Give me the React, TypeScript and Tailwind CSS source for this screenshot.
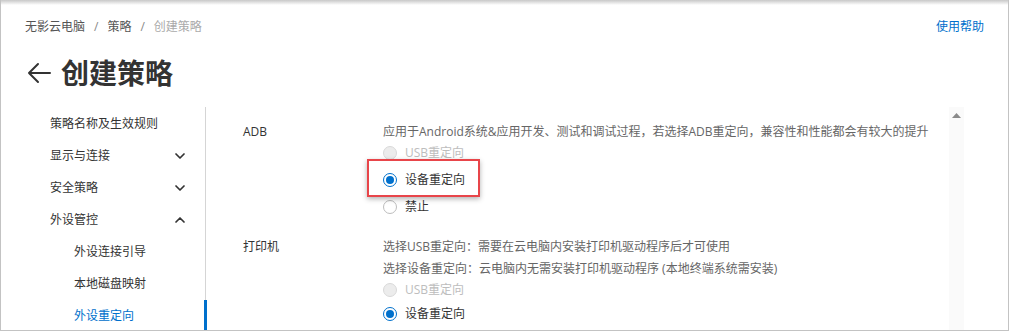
import React from "react";
import { ChevronDown, ChevronUp } from "lucide-react";

const font = { fontFamily: '"Open Sans", "Noto Sans CJK SC", sans-serif' };

function Radio({ state, label, h }: { state: "disabled" | "checked" | "off"; label: string; h: string }) {
  return (
    <div className={`flex items-center ${h}`}>
      {state === "checked" ? (
        <span className="w-[14px] h-[14px] rounded-full border border-[#0070cc] bg-white flex items-center justify-center">
          <span className="w-[8px] h-[8px] rounded-full bg-[#0070cc]" />
        </span>
      ) : state === "disabled" ? (
        <span className="w-[14px] h-[14px] rounded-full border border-[#d9d9d9] bg-[#ececec]" />
      ) : (
        <span className="w-[14px] h-[14px] rounded-full border border-[#bdbdbd] bg-white" />
      )}
      <span className={`ml-[8px] text-[12px] leading-[16px] ${state === "disabled" ? "text-[#bdbdbd]" : "text-[#333]"}`}>{label}</span>
    </div>
  );
}

function NavItem({ label, chevron, indent, active }: { label: string; chevron?: "up" | "down"; indent?: boolean; active?: boolean }) {
  return (
    <div className={`relative h-[32px] flex items-center justify-between pr-[17px] ${indent ? "pl-[73px]" : "pl-[49px]"}`}>
      <span className={`text-[12px] leading-[16px] ${active ? "text-[#0070cc]" : "text-[#333]"}`}>{label}</span>
      {chevron === "down" && <ChevronDown size={16} strokeWidth={2.6} className="text-[#333]" />}
      {chevron === "up" && <ChevronUp size={16} strokeWidth={2.6} className="text-[#333]" />}
      {active && <span className="absolute right-[-2px] top-0 bottom-0 w-[3px] bg-[#0070cc]" />}
    </div>
  );
}

export default function App() {
  return (
    <div style={font} className="relative w-[1009px] h-[331px] overflow-hidden bg-white border-l border-r border-b border-[#c3c3c3] flex flex-col">
      <div className="absolute left-0 right-0 top-0 h-[5px] bg-gradient-to-b from-[#c8c8c8] to-white" />
      <div className="flex items-center justify-between px-[24px] pt-[19px] h-[35px]">
        <div className="flex items-center text-[12px] leading-[16px]">
          <span className="text-[#555]">无影云电脑</span>
          <span className="text-[#888] mx-[9px]">/</span>
          <span className="text-[#555]">策略</span>
          <span className="text-[#888] mx-[9px]">/</span>
          <span className="text-[#aaa]">创建策略</span>
        </div>
        <span className="text-[12px] leading-[16px] text-[#0070cc]">使用帮助</span>
      </div>
      <div className="flex items-center h-[72px] pl-[26px] pt-[3px]">
        <svg width="24" height="22" viewBox="0 0 24 22" className="text-[#333]">
          <path d="M23 11 H2 M11 2 L2 11 L11 20" fill="none" stroke="currentColor" strokeWidth="2" strokeLinecap="round" strokeLinejoin="round" />
        </svg>
        <span className="ml-[10px] text-[28px] leading-[36px] font-bold text-[#333]">创建策略</span>
      </div>
      <div className="flex flex-1 min-h-0">
        <div className="w-[205px] border-r border-[#d5d5d5] pt-[1px]">
          <NavItem label="策略名称及生效规则" />
          <NavItem label="显示与连接" chevron="down" />
          <NavItem label="安全策略" chevron="down" />
          <NavItem label="外设管控" chevron="up" />
          <NavItem label="外设连接引导" indent />
          <NavItem label="本地磁盘映射" indent />
          <NavItem label="外设重定向" indent active />
        </div>
        <div className="flex-1 pl-[37px] pt-[15px] text-[12px]">
          <div className="flex">
            <div className="w-[140px] h-[20px] flex items-center text-[#333]">ADB</div>
            <div className="flex flex-col">
              <div className="h-[20px] flex items-center text-[#666]">应用于Android系统&amp;应用开发、测试和调试过程，若选择ADB重定向，兼容性和性能都会有较大的提升</div>
              <Radio state="disabled" label="USB重定向" h="h-[22px]" />
              <div className="relative">
                <Radio state="checked" label="设备重定向" h="h-[32px]" />
                <div className="absolute left-[-16px] top-[-5px] w-[113px] h-[38px] border-2 border-[#e8454a] shadow-[0_2px_5px_rgba(0,0,0,0.3)]" />
              </div>
              <Radio state="off" label="禁止" h="h-[22px]" />
            </div>
          </div>
          <div className="flex mt-[18px]">
            <div className="w-[140px] h-[22px] flex items-center text-[#333]">打印机</div>
            <div className="flex flex-col">
              <div className="h-[22px] flex items-center text-[#666]">选择USB重定向：需要在云电脑内安装打印机驱动程序后才可使用</div>
              <div className="h-[22px] flex items-center text-[#666]">选择设备重定向：云电脑内无需安装打印机驱动程序 (本地终端系统需安装)</div>
              <Radio state="disabled" label="USB重定向" h="h-[20px]" />
              <Radio state="checked" label="设备重定向" h="h-[28px]" />
            </div>
          </div>
        </div>
        <div className="w-[15px] bg-[#fafafa] flex justify-center pt-[6px] mr-[44px]">
          <svg width="9" height="5" viewBox="0 0 9 5">
            <path d="M0 5 L4.5 0 L9 5 Z" fill="#8a8a8a" />
          </svg>
        </div>
      </div>
    </div>
  );
}
